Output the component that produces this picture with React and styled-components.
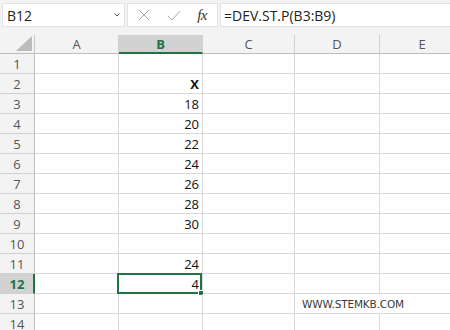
import React from 'react';
import styled, { createGlobalStyle, css } from 'styled-components';

const GREEN = '#217346';

const GlobalStyle = createGlobalStyle`
  body {
    margin: 0;
    background: #ffffff;
    overflow: hidden;
  }
`;

const Page = styled.div`
  width: 450px;
  height: 330px;
  overflow: hidden;
  background: #ffffff;
  font-family: 'Open Sans', 'Noto Sans', sans-serif;
`;

const FormulaBar = styled.div`
  display: flex;
  align-items: flex-start;
  gap: 2px;
  height: 35px;
  padding: 3px 0 0 2px;
  box-sizing: border-box;
  background: #f3f3f3;
`;

const Box = styled.div`
  height: 24px;
  box-sizing: border-box;
  background: #ffffff;
  border: 1px solid #e3e3e3;
  display: flex;
  align-items: center;
`;

const NameBox = styled(Box)`
  width: 123px;
  padding: 0 4px 0 4px;
  justify-content: space-between;
  font-size: 14px;
  color: #222;
`;

const FuncBox = styled(Box)`
  width: 91px;
  padding: 0 10px 0 10px;
  justify-content: space-between;
`;

const Fx = styled.span`
  font-family: 'Liberation Serif', 'DejaVu Serif', serif;
  font-style: italic;
  font-size: 15px;
  color: #333;
  letter-spacing: -0.5px;
`;

const FormulaInput = styled(Box)`
  flex: 1;
  border-right: none;
  padding-left: 3px;
  font-size: 14px;
  color: #222;
`;

const Sheet = styled.div`
  display: grid;
  grid-template-columns: 35px 84px 84px 92px 85px 85px;
  grid-template-rows: 19px;
  grid-auto-rows: 20px;
  width: 465px;
`;

const Corner = styled.div`
  background: #f3f3f3;
  border-right: 1px solid #c8c8c8;
  border-bottom: 1px solid #bdbdbd;
  display: flex;
  align-items: flex-end;
  justify-content: flex-end;
  padding: 0 2px 2px 0;
  box-sizing: border-box;

  &::after {
    content: '';
    width: 16px;
    height: 15px;
    background: #bcbcbc;
    clip-path: polygon(100% 0, 100% 100%, 0 100%);
  }
`;

const ColHead = styled.div`
  background: ${({ $active }) => ($active ? '#d2d2d2' : '#f3f3f3')};
  border-right: 1px solid #d0d0d0;
  border-bottom: ${({ $active }) =>
    $active ? `2px solid ${GREEN}` : '1px solid #bdbdbd'};
  box-sizing: border-box;
  display: flex;
  align-items: center;
  justify-content: center;
  font-size: 13px;
  color: ${({ $active }) => ($active ? GREEN : '#555')};
  font-weight: ${({ $active }) => ($active ? 700 : 400)};
  padding-top: ${({ $active }) => ($active ? '1px' : '0')};
`;

const RowHead = styled.div`
  background: ${({ $active }) => ($active ? '#d2d2d2' : '#f3f3f3')};
  border-right: ${({ $active }) =>
    $active ? `2px solid ${GREEN}` : '1px solid #bdbdbd'};
  border-bottom: 1px solid #d0d0d0;
  box-sizing: border-box;
  display: flex;
  align-items: center;
  justify-content: center;
  font-size: 13px;
  color: ${({ $active }) => ($active ? GREEN : '#555')};
  font-weight: ${({ $active }) => ($active ? 700 : 400)};
  padding-left: ${({ $active }) => ($active ? '1px' : '0')};
`;

const Cell = styled.div`
  position: relative;
  border-right: 1px solid #d9d9d9;
  border-bottom: 1px solid #d9d9d9;
  box-sizing: border-box;
  display: flex;
  align-items: center;
  justify-content: flex-end;
  padding-right: 3px;
  font-size: 13px;
  color: #111;
  font-weight: ${({ $bold }) => ($bold ? 700 : 400)};
  ${({ $spill }) =>
    $spill &&
    css`
      border-right-color: transparent;
      justify-content: flex-start;
      overflow: visible;
      z-index: 1;
    `}
`;

const Watermark = styled.span`
  font-family: 'DejaVu Sans', Verdana, sans-serif;
  font-size: 10.5px;
  letter-spacing: -0.15px;
  color: #3a3a3a;
  white-space: nowrap;
  padding-left: 7px;
`;

const Selection = styled.div`
  position: absolute;
  top: -1px;
  left: -2px;
  right: 0;
  bottom: -1px;
  border: 2px solid ${GREEN};
  pointer-events: none;

  &::after {
    content: '';
    position: absolute;
    right: -4px;
    bottom: -4px;
    width: 4px;
    height: 4px;
    background: ${GREEN};
    border: 1px solid #ffffff;
  }
`;

const Icon = ({ children, w = 12, h = 12 }) => (
  <svg width={w} height={h} viewBox={`0 0 ${w} ${h}`} fill="none">
    {children}
  </svg>
);

const COLS = ['A', 'B', 'C', 'D', 'E'];

const rows = [
  {},
  { B: 'X', bold: true },
  { B: '18' },
  { B: '20' },
  { B: '22' },
  { B: '24' },
  { B: '26' },
  { B: '28' },
  { B: '30' },
  {},
  { B: '24' },
  { B: '4', selected: true },
  { D: 'WWW.STEMKB.COM', spill: true },
  {},
];

export default function App() {
  return (
    <Page>
      <GlobalStyle />
      <FormulaBar>
        <NameBox>
          <span>B12</span>
          <Icon w={6} h={4}>
            <path d="M0.5 0.5 L3 3 L5.5 0.5" stroke="#555" strokeWidth="1" />
          </Icon>
        </NameBox>
        <FuncBox>
          <Icon w={12} h={12}>
            <path d="M1 1 L11 11 M11 1 L1 11" stroke="#a6a6a6" strokeWidth="1" />
          </Icon>
          <Icon w={14} h={11}>
            <path d="M1 6 L5 10 L13 1" stroke="#a6a6a6" strokeWidth="1" />
          </Icon>
          <Fx>fx</Fx>
        </FuncBox>
        <FormulaInput>=DEV.ST.P(B3:B9)</FormulaInput>
      </FormulaBar>

      <Sheet>
        <Corner />
        {COLS.map((c) => (
          <ColHead key={c} $active={c === 'B'}>
            {c}
          </ColHead>
        ))}
        {rows.map((r, i) => (
          <React.Fragment key={i}>
            <RowHead $active={r.selected}>{i + 1}</RowHead>
            {COLS.map((c) => (
              <Cell
                key={c}
                $bold={c === 'B' && r.bold}
                $spill={r.spill && c === 'D'}
              >
                {r.spill && c === 'D' ? (
                  <Watermark>{r[c]}</Watermark>
                ) : (
                  r[c]
                )}
                {r.selected && c === 'B' && <Selection />}
              </Cell>
            ))}
          </React.Fragment>
        ))}
      </Sheet>
    </Page>
  );
}
